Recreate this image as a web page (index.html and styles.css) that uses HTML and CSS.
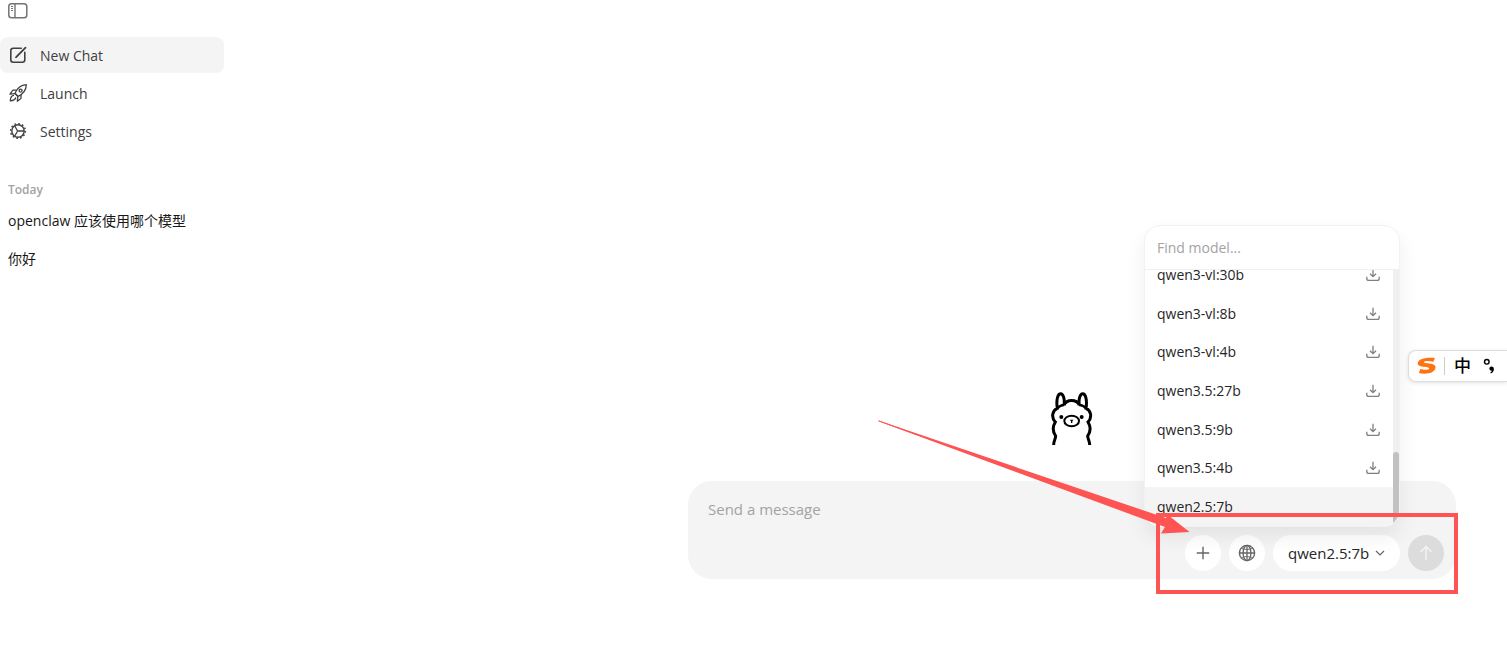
FILE: index.html
```
<!DOCTYPE html>
<html lang="en">
<head>
    <meta charset="UTF-8">
    <meta name="viewport" content="width=device-width, initial-scale=1.0">
    <title>New Chat</title>
    <link rel="stylesheet" href="styles.css">
</head>
<body>
    <svg class="symbols" aria-hidden="true">
        <symbol id="icon-download" viewBox="0 0 14 14">
            <path d="M7 0.7v7.6M4 5.7l3 3 3-3M0.8 8.8v1.6q0 2 2 2h8.4q2 0 2-2V8.8" fill="none" stroke="currentColor" stroke-width="1.3"/>
        </symbol>
    </svg>

    <div class="app">
        <aside class="sidebar">
            <button class="toggle" type="button" aria-label="Toggle sidebar">
                <svg width="20" height="16" viewBox="0 0 20 16" fill="none" stroke="currentColor">
                    <rect x="0.8" y="0.8" width="18" height="14" rx="2.8" stroke-width="1.5"/>
                    <path d="M7 1v14" stroke-width="1.4"/>
                    <path d="M3 3.5h2M3 5.5h2M3 7.5h2" stroke-width="1"/>
                </svg>
            </button>
            <nav class="nav">
                <a class="nav-item active" href="#new">
                    <svg width="20" height="20" viewBox="0 0 20 20" fill="none" stroke="currentColor" stroke-width="1.6" stroke-linecap="round">
                        <path d="M13.2 3.2H5.3Q2.8 3.2 2.8 5.7v9Q2.8 17.2 5.3 17.2h9q2.5 0 2.5-2.5V7.3"/>
                        <path d="M8.4 11.8L17.5 2.6" stroke-width="1.8"/>
                        <path d="M7.6 12.5l.8-.3" stroke-width="1.2"/>
                    </svg>
                    New Chat
                </a>
                <a class="nav-item" href="#launch">
                    <svg width="20" height="20" viewBox="0 0 20 20" fill="none" stroke="currentColor" stroke-width="1.3" stroke-linejoin="round">
                        <path d="M7 10.3C9 5.5 12.3 2.1 18.3 1.7C18.2 7.4 14.8 11 10.1 13.4Z"/>
                        <circle cx="12.6" cy="7.6" r="1.5"/>
                        <path d="M8.4 7.2H5.4Q4.6 7.2 4.1 8L2 11.2L6.9 10.7M13 11.7v3q0 .8-.7 1.3L9.3 18.2L9.8 13.6"/>
                        <path d="M6 12.4Q2.6 12.3 2.3 17.8Q7.3 17.6 7.7 14.4"/>
                        <path d="M6.8 10.4l3.2 3.2"/>
                    </svg>
                    Launch
                </a>
                <a class="nav-item" href="#settings">
                    <svg width="20" height="20" viewBox="0 0 20 20" fill="none" stroke="currentColor">
                        <circle cx="10" cy="10" r="6.2" stroke-width="1.4"/>
                        <circle cx="10" cy="10" r="7.4" stroke-width="1.4" stroke-dasharray="1.7 2.175"/>
                        <path d="M9.6 10H16M9.6 10L6.6 4.7M9.6 10L6.6 15.3" stroke-width="1.3"/>
                    </svg>
                    Settings
                </a>
            </nav>
            <h2 class="group-title">Today</h2>
            <nav class="history">
                <a href="#chat-1">openclaw 应该使用哪个模型</a>
                <a href="#chat-2">你好</a>
            </nav>
        </aside>

        <main class="main">
            <div class="chat">
                <svg class="llama" width="42" height="53" viewBox="35 37 126 159" fill="none" stroke="#000" stroke-width="9">
                    <path d="M43 196C43 182 49 178 49 169C40 156 40 140 48 127C34 112 40 91 54 86C50 62 55 42 64 42C72 42 77 60 74 76C83 58 111 58 120 76C117 60 122 42 130 42C139 42 144 62 140 86C154 91 160 112 146 127C154 140 154 156 145 169C145 178 151 182 151 196"/>
                    <path d="M54 86Q64 75 75 76M140 86Q130 75 119 76" stroke-width="7"/>
                    <ellipse cx="97" cy="124" rx="22" ry="16" stroke-width="6"/>
                    <path d="M91 120h12l-4 4v6h-4v-6z" fill="#000" stroke="none"/>
                    <circle cx="66" cy="112" r="6" fill="#000" stroke="none"/>
                    <circle cx="127" cy="112" r="6" fill="#000" stroke="none"/>
                </svg>

                <form class="composer">
                    <textarea class="message" rows="1" placeholder="Send a message" aria-label="Message"></textarea>
                    <div class="toolbar">
                        <button class="round" type="button" aria-label="Add file">
                            <svg width="14" height="14" viewBox="0 0 14 14" stroke="currentColor" stroke-width="1.4"><path d="M7 0.8v12.4M0.8 7h12.4"/></svg>
                        </button>
                        <button class="round" type="button" aria-label="Web search">
                            <svg width="18" height="18" viewBox="0 0 18 18" fill="none" stroke="currentColor" stroke-width="1.4">
                                <circle cx="9" cy="9" r="7.6"/>
                                <ellipse cx="9" cy="9" rx="3.9" ry="7.6" stroke-width="1.3"/>
                                <path d="M9 1.4v15.2M1.4 9h15.2" stroke-width="1.3"/>
                                <path d="M3.2 4.4Q9 6.8 14.8 4.4M3.2 13.6Q9 11.2 14.8 13.6" stroke-width="0.9"/>
                            </svg>
                        </button>
                        <div class="picker">
                            <button class="picker-button" type="button" aria-expanded="true">
                                qwen2.5:7b
                                <svg width="10" height="6" viewBox="0 0 10 6" fill="none" stroke="#666" stroke-width="1.2"><path d="M1 1l4 4 4-4"/></svg>
                            </button>
                            <div class="menu">
                                <input class="search" type="text" placeholder="Find model..." aria-label="Find model">
                                <div class="menu-body">
                                    <ul class="models">
                                        <li><button type="button">qwen3-vl:30b <svg width="14" height="14"><use href="#icon-download"/></svg></button></li>
                                        <li><button type="button">qwen3-vl:8b <svg width="14" height="14"><use href="#icon-download"/></svg></button></li>
                                        <li><button type="button">qwen3-vl:4b <svg width="14" height="14"><use href="#icon-download"/></svg></button></li>
                                        <li><button type="button">qwen3.5:27b <svg width="14" height="14"><use href="#icon-download"/></svg></button></li>
                                        <li><button type="button">qwen3.5:9b <svg width="14" height="14"><use href="#icon-download"/></svg></button></li>
                                        <li><button type="button">qwen3.5:4b <svg width="14" height="14"><use href="#icon-download"/></svg></button></li>
                                        <li><button class="selected" type="button">qwen2.5:7b</button></li>
                                    </ul>
                                    <div class="track"><div class="thumb"></div></div>
                                </div>
                            </div>
                        </div>
                        <button class="round send" type="submit" aria-label="Send" disabled>
                            <svg width="14" height="16" viewBox="0 0 14 16" fill="none" stroke="currentColor" stroke-width="1.5"><path d="M7 15V1.5M1.5 7L7 1.5 12.5 7"/></svg>
                        </button>
                    </div>
                    <!-- arrow and box pointing at the toolbar -->
                    <svg class="callout" width="580" height="174" viewBox="0 0 580 174" aria-hidden="true">
                        <rect x="280" y="95" width="298" height="77" fill="none" stroke="#fe5454" stroke-width="4"/>
                        <path d="M0.5 0.5L1 1.5L287 107L283 113.5L311.5 112L290 95L288 98Z" fill="#fe5454"/>
                        <path d="M0.5 0.8L290 105" stroke="#fe5454"/>
                    </svg>
                </form>
            </div>
        </main>
    </div>

    <div class="ime">
        <svg width="19" height="18" viewBox="0 0 19 18" fill="#ff720f">
            <path d="M18 1C11 0.2 1 1.2 0.7 6.3C0.5 11 12.3 9.4 12.2 11.4C12 13.2 7 13.2 3.2 12L2 16C8 17.6 18.3 16.5 18.6 10.2C18.8 5.6 7 7 7 5.3C7.1 3.8 12 3.8 16.3 4.8Z"/>
        </svg>
        <span class="ime-mode">中</span>
        <svg width="13" height="16" viewBox="0 0 13 16">
            <circle cx="3.8" cy="3.8" r="2.3" fill="none" stroke="#000" stroke-width="1.4"/>
            <path d="M6.3 10.6a2.3 2.3 0 1 1 4.6 .3q0 3.2-3.1 4.6l-.5-.9q1.4-.8 1.5-1.8-2.5 0-2.5-2.2z"/>
        </svg>
    </div>
</body>
</html>
```

FILE: styles.css
```
* {
    box-sizing: border-box;
}

body {
    margin: 0;
    background: #fff;
    color: #262626;
    font-family: "Open Sans", "Noto Sans CJK SC", sans-serif;
    font-size: 14px;
    overflow: hidden;
}

button,
input,
textarea {
    border: none;
    padding: 0;
    background: none;
    color: inherit;
    font: inherit;
    outline: none;
}

a {
    color: inherit;
    text-decoration: none;
}

svg {
    flex-shrink: 0;
}

.symbols {
    position: absolute;
    width: 0;
    height: 0;
}

.app {
    display: flex;
    min-height: 100vh;
}

/* sidebar */
.sidebar {
    width: 224px;
    flex-shrink: 0;
}

.toggle {
    display: flex;
    height: 37px;
    padding: 3px 8px;
    color: #737373;
}

.nav,
.history {
    display: flex;
    flex-direction: column;
    gap: 2px;
}

.nav-item {
    display: flex;
    align-items: center;
    gap: 12px;
    height: 36px;
    padding: 0 8px;
    border-radius: 8px;
    color: #404040;
}

.nav-item.active {
    background: #f4f4f4;
}

.group-title {
    margin: 32px 8px 4px;
    color: #a3a3a3;
    font-size: 12px;
    font-weight: 600;
    line-height: 18px;
}

.history a {
    padding: 0 8px;
    color: #171717;
    line-height: 36px;
}

/* chat */
.main {
    flex: 1;
    display: flex;
    align-items: flex-end;
    justify-content: flex-end;
    padding: 0 51px 91px;
}

.chat {
    width: 100%;
    max-width: 768px;
    display: flex;
    flex-direction: column;
    align-items: center;
    gap: 36px;
}

.composer {
    position: relative;
    width: 100%;
    padding: 16px 12px 8px 20px;
    border-radius: 24px;
    background: #f4f4f4;
}

.message {
    display: block;
    width: 100%;
    height: 24px;
    margin-bottom: 14px;
    font-size: 15px;
    line-height: 24px;
    resize: none;
    overflow: hidden;
}

.message::placeholder,
.search::placeholder {
    color: #a3a3a3;
    opacity: 1;
}

.toolbar {
    display: flex;
    justify-content: flex-end;
    gap: 8px;
}

.round {
    display: flex;
    align-items: center;
    justify-content: center;
    width: 36px;
    height: 36px;
    border-radius: 50%;
    background: #fff;
    color: #666;
}

.send {
    background: #dcdcdc;
    color: #f4f4f4;
}

.picker {
    position: relative;
}

.picker-button {
    display: flex;
    align-items: center;
    justify-content: space-between;
    width: 127px;
    height: 36px;
    padding: 0 15px;
    border-radius: 18px;
    background: #fff;
    font-size: 15px;
}

/* model menu */
.menu {
    position: absolute;
    right: 0;
    bottom: calc(100% + 8px);
    width: 256px;
    border: 1px solid #f2f2f2;
    border-radius: 16px;
    background: #fff;
    box-shadow: 0 10px 20px rgba(0, 0, 0, 0.07);
    overflow: hidden;
}

.search {
    display: block;
    width: 100%;
    height: 44px;
    padding: 0 12px;
    border-bottom: 1px solid #f0f0f0;
    font-size: 14px;
}

.menu-body {
    display: flex;
    align-items: flex-end;
    height: 256px;
    overflow: hidden;
}

.models {
    flex: 1;
    display: grid;
    grid-auto-rows: 1fr;
    height: 270px;
    margin: 0;
    padding: 0;
    list-style: none;
}

.models button {
    display: flex;
    align-items: center;
    justify-content: space-between;
    width: 100%;
    height: 100%;
    padding: 0 13px 0 12px;
    font-size: 14px;
    line-height: 12px;
}

.models svg {
    color: #808080;
}

.models .selected {
    background: #f4f4f4;
}

.track {
    display: flex;
    align-items: flex-end;
    width: 6px;
    height: 100%;
    background: #f0f0f0;
}

.thumb {
    width: 100%;
    height: 74px;
    border-radius: 3px;
    background: #c1c1c1;
}

.callout {
    position: absolute;
    right: -2px;
    bottom: -15px;
    pointer-events: none;
}

/* input method bar, docked to the window edge */
.ime {
    position: absolute;
    top: 350px;
    right: 0;
    display: flex;
    align-items: center;
    gap: 8px;
    width: 99px;
    height: 32px;
    padding-left: 8px;
    border: 1px solid #ddd;
    border-right: none;
    border-radius: 8px 0 0 8px;
    background: #fff;
    box-shadow: 0 1px 4px rgba(0, 0, 0, 0.12);
}

.ime-mode {
    padding: 0 4px 0 9px;
    border-left: 1px solid #ccc;
    color: #000;
    font-size: 17px;
    font-weight: 500;
    line-height: 18px;
}
```
